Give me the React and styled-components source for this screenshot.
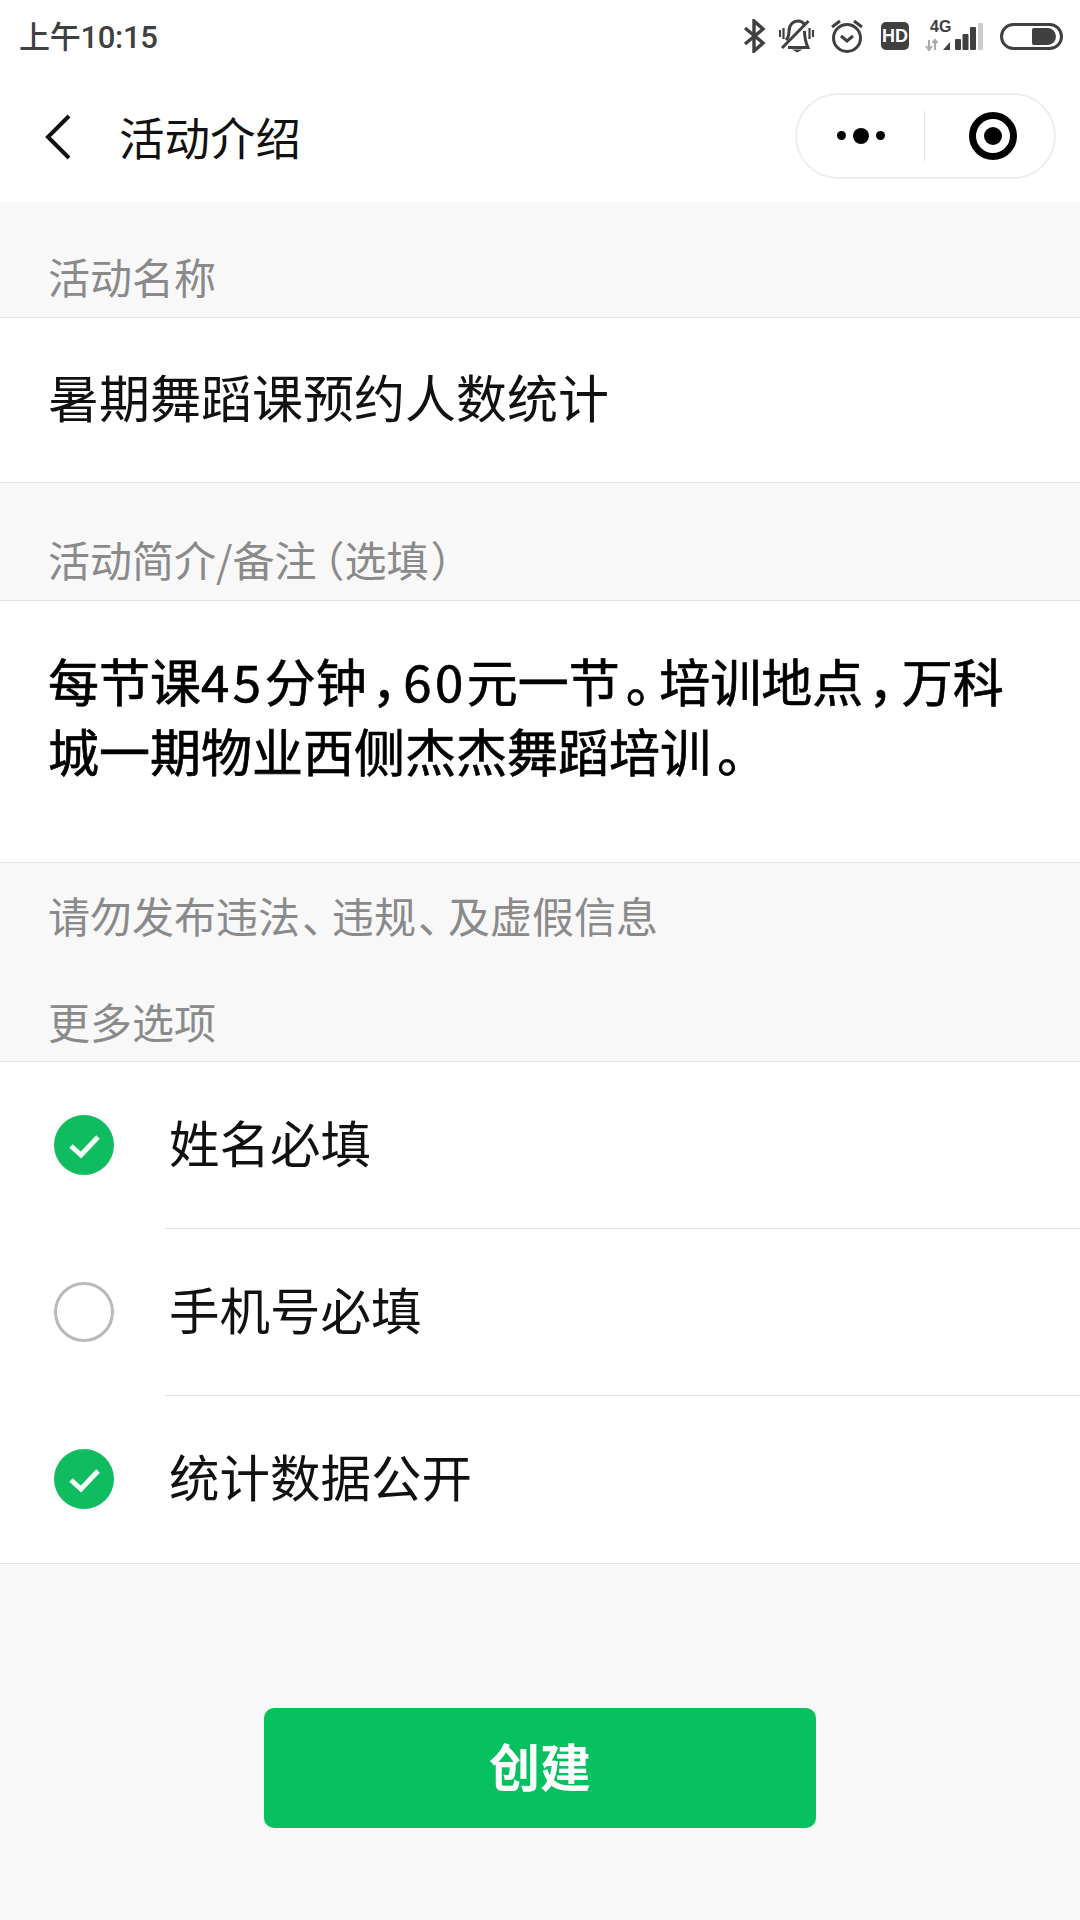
import React from 'react';
import styled, { createGlobalStyle } from 'styled-components';

const GlobalStyle = createGlobalStyle`
  html, body {
    margin: 0;
    padding: 0;
    background: #f8f8f8;
    font-family: "Noto Sans CJK SC", "Noto Sans", sans-serif;
  }
  * { box-sizing: border-box; }
`;

const Bluetooth = () => (
  <svg width="24" height="34" viewBox="0 0 24 34" fill="none" stroke="#404040" strokeWidth="3.4">
    <path d="M3 9l18 15-9 8V2l9 8L3 25" />
  </svg>
);

const MutedBell = () => (
  <svg width="36" height="34" viewBox="0 0 36 34" fill="none" stroke="#404040" strokeWidth="3">
    <path d="M7 21c2-2 3-5 3-9 0-6 4-10 9.500-10 3 0 5 2 6.500 4" />
    <path d="M25.500 12c0 7 1 11 3.500 16.500H9" />
    <path d="M3 29L29.500 2" />
    <path d="M13 30.500h10.500l-5.200 3z" fill="#404040" stroke="none" />
    <path d="M1 11v7M4.500 9v11M30.500 9v11M34 11v7" strokeWidth="2.2" />
  </svg>
);

const Alarm = () => (
  <svg width="36" height="34" viewBox="0 0 36 34" fill="none" stroke="#404040" strokeWidth="3">
    <circle cx="18" cy="19" r="13.500" />
    <path d="M12 17l6 5 6-5" />
    <path d="M3 8l8-6M33 8l-8-6" />
  </svg>
);

const Signal = () => (
  <svg width="58" height="30" viewBox="0 0 58 30" fill="none">
    <path d="M4 19v10M1 25l3 4 3-4" stroke="#aaaaaa" strokeWidth="2" />
    <path d="M10 29V19M7.500 22l2.500-3 2.500 3" stroke="#aaaaaa" strokeWidth="2" />
    <path d="M18 29h7v-8z" fill="#404040" />
    <rect x="30" y="18" width="6" height="11" rx="1" fill="#404040" />
    <rect x="37.500" y="13" width="6" height="16" rx="1" fill="#404040" />
    <rect x="45" y="6" width="6" height="23" rx="1" fill="#404040" />
    <rect x="53" y="2" width="5" height="27" rx="1" fill="#cccccc" />
  </svg>
);

const Check = () => (
  <svg width="60" height="60" viewBox="0 0 60 60">
    <circle cx="30" cy="30" r="30" fill="#0fbd60" />
    <path d="M17 31l10 9 17-18" fill="none" stroke="#f4fff8" strokeWidth="5" />
  </svg>
);

const Page = styled.div`
  width: 1080px;
  height: 1920px;
  background: #f8f8f8;
  overflow: hidden;
`;

const StatusBar = styled.div`
  height: 80px;
  background: #fff;
  display: flex;
  align-items: center;
  padding: 0 17px 8px 19px;
`;

const Clock = styled.div`
  font-family: Roboto, "Noto Sans CJK SC", sans-serif;
  font-size: 31px;
  font-weight: 500;
  color: #404040;
  letter-spacing: -0.3px;
  flex: 1;
  margin-bottom: 3px;
`;

const StatusIcons = styled.div`
  display: flex;
  align-items: center;
`;

const HdBadge = styled.div`
  width: 28px;
  height: 28px;
  margin: 0 16px;
  border-radius: 5px;
  background: #404040;
  color: #fff;
  font-family: "Liberation Sans", sans-serif;
  font-size: 18px;
  font-weight: 700;
  display: flex;
  align-items: center;
  justify-content: center;
`;

const SignalBox = styled.div`
  position: relative;
  width: 58px;
  height: 30px;
  display: flex;
  margin-right: 17px;
`;

const FourG = styled.span`
  position: absolute;
  top: -2px;
  left: 5px;
  font-family: "Liberation Sans", sans-serif;
  font-size: 16px;
  line-height: 16px;
  font-weight: 700;
  color: #404040;
`;

const Battery = styled.div`
  width: 63px;
  height: 27px;
  border: 3px solid #404040;
  border-radius: 14px;
  padding: 2px 4px 2px 29px;
`;

const BatteryFill = styled.div`
  height: 100%;
  background: #404040;
  border-radius: 2px 9px 9px 2px;
`;

const IconGap = styled.span`
  display: flex;
  margin-right: ${(p) => p.$gap}px;
`;

const NavBar = styled.div`
  height: 122px;
  background: #fff;
  display: flex;
  align-items: center;
  padding: 0 24px 8px 45px;
`;

const BackIcon = styled.svg`
  width: 26px;
  height: 46px;
  margin-right: 48px;
  fill: none;
  stroke: #111;
  stroke-width: 4;
`;

const NavTitle = styled.div`
  flex: 1;
  font-size: 45.5px;
  line-height: 60px;
  color: #111;
  margin-bottom: 3px;
`;

const Capsule = styled.div`
  width: 261px;
  height: 86px;
  border: 2px solid #eeeeee;
  border-radius: 43px;
  display: flex;
  align-items: center;
  margin-top: -3px;
`;

const CapsulePart = styled.div`
  width: 128px;
  height: 50px;
  display: flex;
  align-items: center;
  justify-content: center;
  gap: 7px;
  ${(p) => p.$divided && 'border-right: 1px solid #e2e2e2;'}
`;

const Dot = styled.span`
  width: ${(p) => p.$size}px;
  height: ${(p) => p.$size}px;
  border-radius: 50%;
  background: #000;
`;

const Target = styled.div`
  width: 48px;
  height: 48px;
  margin-left: 7px;
  border: 7px solid #000;
  border-radius: 50%;
  display: flex;
  align-items: center;
  justify-content: center;
`;

const TargetDot = styled.span`
  width: 18px;
  height: 18px;
  border-radius: 50%;
  background: #000;
`;

const SectionLabel = styled.div`
  height: ${(p) => p.$height}px;
  padding: 0 48px ${(p) => p.$bottom}px;
  font-size: 42px;
  line-height: 56px;
  color: #8a8a8a;
  display: flex;
  align-items: flex-end;
`;

const LabelText = styled.span`
  display: block;
`;

// half-width punctuation, the cell is then widened by margins
const Punct = styled.span`
  display: inline-block;
  font-feature-settings: "halt";
  margin-left: ${(p) => p.$left}px;
  margin-right: ${(p) => p.$right}px;
`;

const Digits = styled.span`
  display: inline-block;
  letter-spacing: 3.5px;
`;

const InputRow = styled.div`
  height: 166px;
  background: #fff;
  border-top: 1px solid #e2e2e2;
  border-bottom: 1px solid #e2e2e2;
  padding: 0 48px 8px;
  display: flex;
  align-items: center;
  font-size: 51px;
  color: #111;
`;

const NoteBox = styled.div`
  height: 263px;
  background: #fff;
  border-top: 1px solid #e2e2e2;
  border-bottom: 1px solid #e2e2e2;
  padding: 44px 49px 0 48px;
  font-size: 51px;
  line-height: 70px;
  color: #000;
  -webkit-text-stroke: 0.7px #000;
`;

const OptionList = styled.div`
  background: #fff;
  border-top: 1px solid #e2e2e2;
  border-bottom: 1px solid #e2e2e2;
`;

const Option = styled.div`
  height: 167px;
  display: flex;
  align-items: center;
  padding-left: 54px;
  position: relative;
  font-size: 50.5px;
  color: #111;
  &:not(:last-child)::after {
    content: '';
    position: absolute;
    left: 165px;
    right: 0;
    bottom: 0;
    height: 1px;
    background: #e2e2e2;
  }
`;

const OptionMark = styled.span`
  width: 60px;
  height: 60px;
  margin: 0 55px 2px 0;
  display: flex;
`;

const OptionText = styled.span`
  padding-bottom: 10px;
`;

const EmptyMark = styled.span`
  width: 60px;
  height: 60px;
  border: 3px solid #b9b9b9;
  border-radius: 50%;
`;

const ButtonRow = styled.div`
  display: flex;
  justify-content: center;
  padding-top: 144px;
`;

const CreateButton = styled.button`
  width: 552px;
  height: 120px;
  border: 0;
  border-radius: 10px;
  padding: 0 0 6px;
  background: #07c160;
  color: #fff;
  font-family: inherit;
  font-size: 51px;
  font-weight: 700;
`;

const options = [
  { label: '姓名必填', checked: true },
  { label: '手机号必填', checked: false },
  { label: '统计数据公开', checked: true },
];

export default function App() {
  return (
    <Page>
      <GlobalStyle />
      <StatusBar>
        <Clock>上午10:15</Clock>
        <StatusIcons>
          <IconGap $gap={13}><Bluetooth /></IconGap>
          <IconGap $gap={14}><MutedBell /></IconGap>
          <Alarm />
          <HdBadge>HD</HdBadge>
          <SignalBox>
            <FourG>4G</FourG>
            <Signal />
          </SignalBox>
          <Battery><BatteryFill /></Battery>
        </StatusIcons>
      </StatusBar>
      <NavBar>
        <BackIcon viewBox="0 0 26 46">
          <path d="M24 2L3 23l21 21" />
        </BackIcon>
        <NavTitle>活动介绍</NavTitle>
        <Capsule>
          <CapsulePart $divided>
            <Dot $size={9} />
            <Dot $size={16} />
            <Dot $size={9} />
          </CapsulePart>
          <CapsulePart>
            <Target><TargetDot /></Target>
          </CapsulePart>
        </Capsule>
      </NavBar>
      <SectionLabel $height={115} $bottom={13}>活动名称</SectionLabel>
      <InputRow>暑期舞蹈课预约人数统计</InputRow>
      <SectionLabel $height={117} $bottom={13}>
        <LabelText>
          活动简介/备注<Punct $left={7} $right={0}>（</Punct>选填<Punct $left={2} $right={0}>）</Punct>
        </LabelText>
      </SectionLabel>
      <NoteBox>
        每节课<Digits>45</Digits>分钟<Punct $left={5} $right={6}>，</Punct><Digits>60</Digits>元一节<Punct $left={6} $right={8}>。</Punct>培训地点<Punct $left={5} $right={8}>，</Punct>万科城一期物业西侧杰杰舞蹈培训<Punct $left={6} $right={0}>。</Punct>
      </NoteBox>
      <SectionLabel $height={84} $bottom={4}>
        <LabelText>
          请勿发布违法<Punct $left={2} $right={9}>、</Punct>违规<Punct $left={2} $right={9}>、</Punct>及虚假信息
        </LabelText>
      </SectionLabel>
      <SectionLabel $height={114} $bottom={12}>更多选项</SectionLabel>
      <OptionList>
        {options.map((o) => (
          <Option key={o.label}>
            <OptionMark>{o.checked ? <Check /> : <EmptyMark />}</OptionMark>
            <OptionText>{o.label}</OptionText>
          </Option>
        ))}
      </OptionList>
      <ButtonRow>
        <CreateButton>创建</CreateButton>
      </ButtonRow>
    </Page>
  );
}
